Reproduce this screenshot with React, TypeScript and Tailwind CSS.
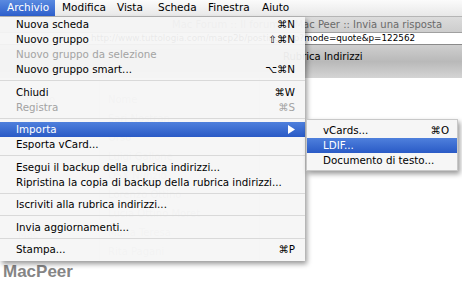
import React from "react";

const font = { fontFamily: '"DejaVu Sans", "Liberation Sans", sans-serif' };

type Item =
  | { kind: "sep" }
  | { kind: "item"; label: string; sc?: string; disabled?: boolean; active?: boolean; arrow?: boolean };

const items: Item[] = [
  { kind: "item", label: "Nuova scheda", sc: "⌘N" },
  { kind: "item", label: "Nuovo gruppo", sc: "⇧⌘N" },
  { kind: "item", label: "Nuovo gruppo da selezione", disabled: true },
  { kind: "item", label: "Nuovo gruppo smart...", sc: "⌥⌘N" },
  { kind: "sep" },
  { kind: "item", label: "Chiudi", sc: "⌘W" },
  { kind: "item", label: "Registra", sc: "⌘S", disabled: true },
  { kind: "sep" },
  { kind: "item", label: "Importa", active: true, arrow: true },
  { kind: "item", label: "Esporta vCard..." },
  { kind: "sep" },
  { kind: "item", label: "Esegui il backup della rubrica indirizzi..." },
  { kind: "item", label: "Ripristina la copia di backup della rubrica indirizzi..." },
  { kind: "sep" },
  { kind: "item", label: "Iscriviti alla rubrica indirizzi..." },
  { kind: "sep" },
  { kind: "item", label: "Invia aggiornamenti..." },
  { kind: "sep" },
  { kind: "item", label: "Stampa...", sc: "⌘P" },
];

function Row({ it }: { it: Item }) {
  if (it.kind === "sep") {
    return (
      <div className="h-[7.5px] flex items-center">
        <div className="h-px w-full bg-[#d9d9d9]" />
      </div>
    );
  }
  const base = "h-[15px] flex items-center pl-[16px] pr-[10px] text-[10.3px] leading-none";
  const color = it.active
    ? "bg-gradient-to-b from-[#4f80dc] to-[#2a5ac6] text-white"
    : it.disabled
    ? "text-[#a3a3a3]"
    : "text-black";
  return (
    <div className={`${base} ${color}`}>
      <span className="flex-1">{it.label}</span>
      {it.sc && <span className="text-right">{it.sc}</span>}
      {it.arrow && (
        <svg width="7" height="9" viewBox="0 0 7 9">
          <polygon points="0,0 7,4.5 0,9" fill="white" />
        </svg>
      )}
    </div>
  );
}

export default function App() {
  return (
    <div className="relative w-[462px] h-[285px] overflow-hidden bg-white" style={font}>
      {/* menu bar */}
      <div className="h-[17px] flex items-stretch bg-gradient-to-b from-[#fbfbfb] to-[#e8e8e8] border-b border-[#b5b5b5] text-[10.5px] text-black">
        <div className="w-[55px] flex items-center pl-[7px] bg-gradient-to-b from-[#5a8ae0] to-[#2e5fcc] text-white">Archivio</div>
        <div className="flex items-center pl-[7px] w-[55px]">Modifica</div>
        <div className="flex items-center pl-[7px] w-[41px]">Vista</div>
        <div className="flex items-center pl-[7px] w-[50px]">Scheda</div>
        <div className="flex items-center pl-[7px] w-[54px]">Finestra</div>
        <div className="flex items-center pl-[7px]">Aiuto</div>
      </div>

      {/* background browser window */}
      <div className="flex flex-col">
        <div className="h-[16px] bg-gradient-to-b from-[#dcdcdc] to-[#cdcdcd] border-b border-[#a0a0a0] flex items-center pl-[172px] text-[10px] text-[#6a6a6a] whitespace-nowrap">
          Mac Forum :: Il forum di Mac Peer :: Invia una risposta
        </div>
        <div className="h-[12px] bg-white border-b border-[#8a8a8a] flex items-center pl-[91px] text-[8.8px] text-black whitespace-nowrap overflow-hidden">
          http://www.tuttologia.com/macp2b/posting.php?mode=quote&amp;p=122562
        </div>
        <div className="h-[33px] bg-gradient-to-b from-[#cfcfcf] via-[#b9b9b9] to-[#d4d4d4] flex items-start pt-[4px] pl-[283px] text-[10px] text-black whitespace-nowrap">
          Rubrica Indirizzi
        </div>
        <div className="h-[183px] bg-white flex text-[10px] text-[#b8b8b8] overflow-hidden">
          <div className="w-[100px] border-r border-[#e6e6e6] flex flex-col pt-[14px] pl-[18px] gap-[30px]">
            <span>Gruppo</span>
            <span>Si e-mail</span>
            <span>Colnas</span>
            <span>Mac</span>
          </div>
          <div className="w-[160px] border-r border-[#e6e6e6] flex flex-col pt-[14px] pl-[8px] gap-[4px]">
            <span>Nome</span>
            <span>Sari Nostran</span>
            <span>Orso</span>
            <span>Luigi Gallone</span>
            <span>OSX Nunzio</span>
            <span>Lorenzo Ottino</span>
            <span>Lucia Ottino Moret</span>
            <span>Maria Teresa</span>
            <span>Rita Pagani</span>
          </div>
          <div className="flex-1" />
        </div>
        <div className="pl-[3px] pt-[1px] text-[17px] leading-[20px] font-bold text-[#858585]" style={{ fontFamily: '"Liberation Sans", Arial, sans-serif' }}>
          MacPeer
        </div>
      </div>

      {/* dropdown menu */}
      <div className="absolute left-0 top-[17px] w-[305px] pb-[4px] bg-[#f6f6f6]/[0.95] shadow-[2px_3px_5px_rgba(0,0,0,0.4)] flex flex-col">
        {items.map((it, i) => (
          <Row key={i} it={it} />
        ))}
      </div>

      {/* submenu */}
      <div className="absolute left-[306px] top-[119px] w-[152px] pt-[3px] pb-[2px] bg-[#f6f6f6] shadow-[2px_3px_5px_rgba(0,0,0,0.4)] border border-[#c8c8c8] flex flex-col text-[10.3px] leading-none">
        <div className="h-[15px] flex items-center pl-[16px] pr-[8px] text-black">
          <span className="flex-1">vCards...</span>
          <span>⌘O</span>
        </div>
        <div className="h-[15px] flex items-center pl-[16px] pr-[8px] text-white bg-gradient-to-b from-[#4f80dc] to-[#2a5ac6]">
          <span className="flex-1">LDIF...</span>
        </div>
        <div className="h-[15px] flex items-center pl-[16px] pr-[8px] text-black">
          <span className="flex-1">Documento di testo...</span>
        </div>
      </div>
    </div>
  );
}
